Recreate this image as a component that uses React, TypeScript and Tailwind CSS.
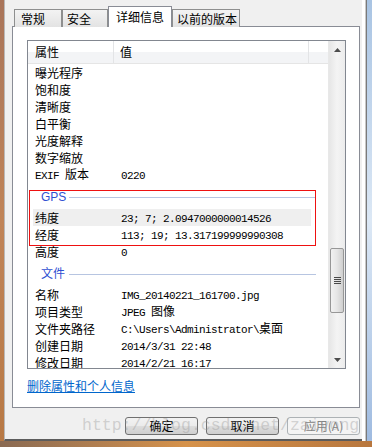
import React from 'react';

const cjk = "font-['SimSun','Noto_Sans_CJK_SC',sans-serif]";

// ASCII runs are drawn half-width (6px), like SimSun's bitmap latin glyphs
function Mix({ text }: { text: string }) {
  const parts = text.split(/([\x20-\x7e]+)/).filter(Boolean);
  return (
    <>
      {parts.map((p, i) =>
        /^[\x20-\x7e]+$/.test(p) ? (
          <span key={i} className="font-['Liberation_Mono',monospace] text-[11px] tracking-[-0.6px] whitespace-pre">
            {p}
          </span>
        ) : (
          <span key={i}>{p}</span>
        )
      )}
    </>
  );
}

type Row = { k: string; v?: string; hi?: boolean } | { group: string };

const rows: Row[] = [
  { k: '曝光程序' },
  { k: '饱和度' },
  { k: '清晰度' },
  { k: '白平衡' },
  { k: '光度解释' },
  { k: '数字缩放' },
  { k: 'EXIF 版本', v: '0220' },
  { group: 'GPS' },
  { k: '纬度', v: '23; 7; 2.0947000000014526', hi: true },
  { k: '经度', v: '113; 19; 13.317199999990308' },
  { k: '高度', v: '0' },
  { group: '文件' },
  { k: '名称', v: 'IMG_20140221_161700.jpg' },
  { k: '项目类型', v: 'JPEG 图像' },
  { k: '文件夹路径', v: 'C:\\Users\\Administrator\\桌面' },
  { k: '创建日期', v: '2014/3/31 22:48' },
  { k: '修改日期', v: '2014/2/21 16:17' },
];

const tabs = [
  { label: '常规', w: 'w-[48px] pl-[6px]' },
  { label: '安全', w: 'w-[46px] pl-[4px]' },
  { label: '详细信息', w: 'w-[64px] pl-[7px]', active: true },
  { label: '以前的版本', w: 'w-[68px] pl-[4px]' },
];

function ScrollBar() {
  return (
    <div className="w-[17px] h-full flex flex-col items-center bg-gradient-to-r from-[#e6e6e6] via-[#f4f4f4] to-[#ececec] border-l border-[#e8e8e8]">
      <div className="h-[17px] w-full flex items-center justify-center">
        <svg width="7" height="4" viewBox="0 0 7 4">
          <path d="M0 4 L3.5 0 L7 4 Z" fill="#4d4d4d" />
        </svg>
      </div>
      <div className="flex-1 w-full flex flex-col">
        <div className="h-[190px]" />
        <div className="h-[65px] mx-[1px] rounded-[2px] border border-[#979797] bg-gradient-to-r from-[#f2f2f2] via-[#e6e6e6] to-[#cfcfcf] flex flex-col items-center justify-center gap-[1px]">
          <div className="w-[7px] h-[1px] bg-[#4a4a4a]" />
          <div className="w-[7px] h-[1px] bg-[#4a4a4a]" />
          <div className="w-[7px] h-[1px] bg-[#4a4a4a]" />
          <div className="w-[7px] h-[1px] bg-[#4a4a4a]" />
        </div>
        <div className="flex-1" />
        <div className="h-[17px] w-full flex items-center justify-center">
          <svg width="7" height="4" viewBox="0 0 7 4">
            <path d="M0 0 L3.5 4 L7 0 Z" fill="#4d4d4d" />
          </svg>
        </div>
      </div>
    </div>
  );
}

function PropertyList() {
  return (
    <div className="h-[329px] border border-[#828790] bg-white flex overflow-hidden">
      <div className="flex-1 flex flex-col relative">
        {/* column header */}
        <div className="h-[23px] shrink-0 flex border-b border-[#e5e5e5] bg-[linear-gradient(#ffffff_0%,#ffffff_50%,#f3f4f6_50%,#f3f4f6_100%)] text-[12px] text-black">
          <div className="w-[86px] pl-[7px] flex items-center border-r border-[#e3e4e6]">属性</div>
          <div className="w-[195px] pl-[6px] flex items-center border-r border-[#e3e4e6]">值</div>
          <div className="flex-1" />
        </div>
        {rows.map((r, i) =>
          'group' in r ? (
            <div key={i} className="h-[26px] shrink-0 flex items-center pt-[2px] pl-[13px] pr-[12px]">
              <span className="w-[28px] text-[12px] text-[#2f50d2] font-['Liberation_Sans','Noto_Sans_CJK_SC',sans-serif]">
                {r.group}
              </span>
              <div className="flex-1 h-[1px] bg-[#b7c5e1]" />
            </div>
          ) : (
            <div
              key={i}
              className={`h-[17px] shrink-0 flex items-center ml-[5px] mr-[17px] pl-[2px] text-[12px] text-black ${
                r.hi ? 'bg-[#efefef]' : ''
              }`}
            >
              <span className="w-[86px] whitespace-pre">
                <Mix text={r.k} />
              </span>
              {r.v && (
                <span className="whitespace-pre">
                  <Mix text={r.v} />
                </span>
              )}
            </div>
          )
        )}
        {/* red annotation box */}
        <div className="absolute left-[1px] top-[149px] w-[287px] h-[56px] border-[1.5px] border-[#ee1111]" />
      </div>
      <ScrollBar />
    </div>
  );
}

export default function App() {
  return (
    <div className={`w-[372px] h-[447px] flex flex-col overflow-hidden bg-[#c4854c] ${cjk}`}>
      <div className="flex h-[441px] shrink-0">
        <div className="w-[4px] bg-gradient-to-b from-[#a9755a] via-[#c08458] to-[#b87945]" />
        <div className="w-[358px] bg-[#f0f0f0] border-l border-b-2 border-l-[#b9b9b9] border-b-[#5c5c5c] pt-[6px] pl-[7px] relative">
          {/* tabs */}
          <div className="h-[21px] flex items-end pl-[2px]">
            {tabs.map((t) =>
              t.active ? (
                <div
                  key={t.label}
                  className={`${t.w} h-[21px] relative z-10 bg-white border border-b-0 border-[#898c95] flex items-start pt-[2px] text-[12px] leading-[16px] text-black`}
                >
                  {t.label}
                </div>
              ) : (
                <div
                  key={t.label}
                  className={`${t.w} h-[18px] bg-gradient-to-b from-[#f3f3f3] to-[#e3e3e3] border border-b-0 border-[#8e8f8f] flex items-start pt-[1px] text-[12px] leading-[16px] text-black`}
                >
                  {t.label}
                </div>
              )
            )}
          </div>
          {/* panel */}
          <div className="w-[348px] h-[382px] -mt-px bg-white border border-[#898c95] pt-[13px] pl-[14px] pr-[13px]">
            <PropertyList />
            <div className="mt-[9px] text-[12px] leading-[16px] text-[#0066cc] underline">删除属性和个人信息</div>
          </div>
          {/* buttons */}
          <div className="w-[348px] mt-[9px] flex justify-end gap-[8px]">
            {['确定', '取消'].map((b) => (
              <div
                key={b}
                className="w-[73px] h-[18px] rounded-[3px] border border-[#707070] bg-[linear-gradient(#f2f2f2_0%,#ebebeb_50%,#dddddd_50%,#cfcfcf_100%)] flex items-center justify-center text-[12px] text-black"
              >
                {b}
              </div>
            ))}
            <div className="w-[73px] h-[18px] rounded-[3px] border border-[#adb2b5] bg-[#f4f4f4] flex items-center justify-center text-[12px] text-[#838383]">
              应用(A)
            </div>
          </div>
          {/* watermark */}
          <div className="absolute left-[77px] top-[414px] text-[16.5px] leading-[24px] text-[#9a9a9a]/40 font-['Liberation_Mono',monospace] pointer-events-none whitespace-pre">
            http://blog.csdn.net/zaiyong
          </div>
        </div>
        <div className="flex-1 flex">
          <div className="w-[3px] bg-white" />
          <div className="w-[1px] bg-[#c8c8c8]" />
          <div className="w-[1px] bg-[#7a7a7a]" />
          <div className="flex-1 bg-gradient-to-b from-[#a9c4e3] via-[#dce8f5] to-[#9fbbe0]" />
        </div>
      </div>
      <div className="flex-1 bg-gradient-to-r from-[#8a6a52] via-[#d6924a] to-[#b8773e]" />
    </div>
  );
}
